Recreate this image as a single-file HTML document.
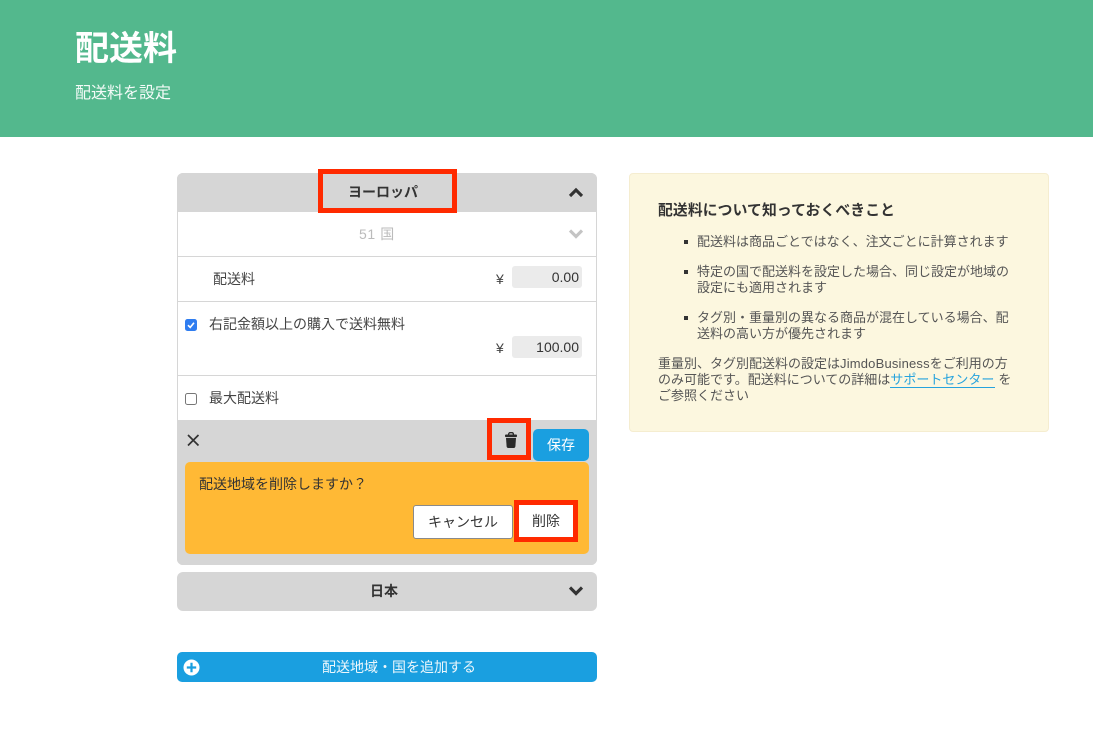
<!DOCTYPE html>
<html lang="ja"><head><meta charset="utf-8"><title>配送料</title>
<style>
html,body{margin:0;padding:0;background:#fff}
body{width:1093px;height:751px;position:relative;overflow:hidden;font-family:"Liberation Sans","Noto Sans CJK JP",sans-serif;color:#444}
.a{position:absolute;white-space:nowrap}
.line{position:absolute;left:178px;width:418px;height:1px;background:#d6d6d6}
.field{position:absolute;left:512px;width:70px;height:22px;background:#ebebeb;border-radius:3px;text-align:right;font-size:14px;line-height:22px;color:#333;box-sizing:border-box;padding-right:3px}
.red{position:absolute;border:5px solid #ff2a00;box-sizing:border-box}
.info{font-size:13px;line-height:16px;color:#555}
.bul{position:absolute;left:684px;width:4px;height:4px;background:#333}
</style></head><body>
<div class="a" style="left:0;top:0;width:1093px;height:137px;background:#53b88d"></div>
<div class="a" style="left:75px;top:24px;font-size:34px;line-height:50px;font-weight:700;color:#fff">配送料</div>
<div class="a" style="left:75px;top:82px;font-size:16px;line-height:24px;color:#f4fbf8">配送料を設定</div>

<!-- panel -->
<div class="a" style="left:177px;top:173px;width:420px;height:392px;box-sizing:border-box;border:1px solid #d6d6d6;border-radius:6px;background:#fff"></div>
<div class="a" style="left:177px;top:173px;width:420px;height:39px;background:#d6d6d6;border-radius:6px 6px 0 0"></div>
<div class="a" style="left:348px;top:182px;font-size:14px;line-height:20px;font-weight:700;color:#333">ヨーロッパ</div>
<svg class="a" style="left:568px;top:186px" width="16" height="12" viewBox="0 0 16 12"><path d="M2 10L8 4L14 10" fill="none" stroke="#333" stroke-width="3.100"/></svg>

<div class="a" style="left:359px;top:224px;font-size:14px;line-height:20px;color:#bbb;letter-spacing:.6px">51 国</div>
<svg class="a" style="left:568px;top:228px" width="16" height="12" viewBox="0 0 16 12"><path d="M2 2.500L8 8.500L14 2.500" fill="none" stroke="#c4c4c4" stroke-width="3.100"/></svg>
<div class="line" style="top:256px"></div>

<div class="a" style="left:213px;top:269px;font-size:14px;line-height:20px;color:#444">配送料</div>
<div class="a" style="left:496px;top:269px;font-size:14px;line-height:20px;color:#444">¥</div>
<div class="field" style="top:266px">0.00</div>
<div class="line" style="top:301px"></div>

<svg class="a" style="left:185px;top:319px" width="12" height="12" viewBox="0 0 12 12"><rect width="12" height="12" rx="2.500" fill="#2f7df0"/><path d="M3 6.200L5.200 8.400L9 3.800" fill="none" stroke="#fff" stroke-width="1.600"/></svg>
<div class="a" style="left:209px;top:314px;font-size:14px;line-height:20px;color:#444">右記金額以上の購入で送料無料</div>
<div class="a" style="left:496px;top:338px;font-size:14px;line-height:20px;color:#444">¥</div>
<div class="field" style="top:336px">100.00</div>
<div class="line" style="top:375px"></div>

<div class="a" style="left:185px;top:393px;width:12px;height:12px;box-sizing:border-box;border:1px solid #777;border-radius:2.500px;background:#fff"></div>
<div class="a" style="left:209px;top:388px;font-size:14px;line-height:20px;color:#444">最大配送料</div>

<!-- footer -->
<div class="a" style="left:177px;top:420px;width:420px;height:145px;background:#d6d6d6;border-radius:0 0 6px 6px"></div>
<svg class="a" style="left:186px;top:433px" width="14" height="14" viewBox="0 0 14 14"><path d="M2 2L12.500 12.500M12.500 2L2 12.500" stroke="#333" stroke-width="1.700" fill="none"/></svg>
<svg class="a" style="left:505px;top:432px" width="12" height="16" viewBox="0 0 12 16"><path d="M3.600 2.500C3.600 1.300 4.300 .7 5 .7H7C7.700 .7 8.400 1.300 8.400 2.500" fill="none" stroke="#2a2a2a" stroke-width="1.300"/><rect x="0" y="2.500" width="12" height="2.600" rx="1" fill="#2a2a2a"/><path d="M1 6H11L10.400 14.300C10.300 15.300 9.700 16 8.800 16H3.200C2.300 16 1.700 15.300 1.600 14.300Z" fill="#2a2a2a"/></svg>
<div class="red" style="left:487px;top:418px;width:44px;height:42px"></div>
<div class="a" style="left:533px;top:429px;width:56px;height:32px;background:#1a9fe0;border-radius:5px;text-align:center;font-size:14px;line-height:32px;color:#fff">保存</div>

<div class="a" style="left:185px;top:462px;width:404px;height:92px;background:#ffb935;border-radius:5px"></div>
<div class="a" style="left:199px;top:474px;font-size:14px;line-height:20px;color:#333">配送地域を削除しますか？</div>
<div class="a" style="left:413px;top:505px;width:100px;height:34px;box-sizing:border-box;background:#fff;border:1px solid #8a8a8a;border-radius:3px;text-align:center;font-size:14px;line-height:32px;color:#333">キャンセル</div>
<div class="a" style="left:516px;top:503px;width:60px;height:37px;background:#fff;text-align:center;font-size:14px;line-height:37px;color:#333">削除</div>
<div class="red" style="left:514px;top:500px;width:64px;height:42px"></div>

<div class="red" style="left:318px;top:169px;width:139px;height:44px"></div>

<!-- japan -->
<div class="a" style="left:177px;top:572px;width:420px;height:39px;background:#d6d6d6;border-radius:6px"></div>
<div class="a" style="left:370px;top:581px;font-size:14px;line-height:20px;font-weight:700;color:#333">日本</div>
<svg class="a" style="left:568px;top:585px" width="16" height="12" viewBox="0 0 16 12"><path d="M2 2.500L8 8.500L14 2.500" fill="none" stroke="#333" stroke-width="3.100"/></svg>

<!-- add -->
<div class="a" style="left:177px;top:652px;width:420px;height:30px;background:#1a9fe0;border-radius:5px"></div>
<svg class="a" style="left:183px;top:659px" width="17" height="17" viewBox="0 0 17 17"><circle cx="8.500" cy="8.500" r="8" fill="#fff"/><path d="M8.500 3.800V13.200M3.800 8.500H13.200" stroke="#1a9fe0" stroke-width="2.200"/></svg>
<div class="a" style="left:322px;top:657px;font-size:14px;line-height:21px;color:#fff;opacity:.92">配送地域・国を追加する</div>

<!-- info -->
<div class="a" style="left:629px;top:173px;width:420px;height:259px;box-sizing:border-box;background:#fcf7df;border:1px solid #f5edd0;border-radius:4px"></div>
<div class="a" style="left:658px;top:201px;font-size:14.800px;line-height:21px;font-weight:700;color:#333;letter-spacing:.12px">配送料について知っておくべきこと</div>
<div class="bul" style="top:240px"></div>
<div class="a info" style="left:697px;top:234px">配送料は商品ごとではなく、注文ごとに計算されます</div>
<div class="bul" style="top:270px"></div>
<div class="a info" style="left:697px;top:264px">特定の国で配送料を設定した場合、同じ設定が地域の<br>設定にも適用されます</div>
<div class="bul" style="top:316px"></div>
<div class="a info" style="left:697px;top:310px">タグ別・重量別の異なる商品が混在している場合、配<br>送料の高い方が優先されます</div>
<div class="a info" style="left:658px;top:356px">重量別、タグ別配送料の設定は<span style="letter-spacing:.18px">JimdoBusiness</span>をご利用の方<br>のみ可能です。配送料についての詳細は<span style="color:#26a3dd;border-bottom:1px solid #26a3dd;padding-right:1px">サポートセンター</span><span style="margin-left:3px">を</span><br>ご参照ください</div>
</body></html>
